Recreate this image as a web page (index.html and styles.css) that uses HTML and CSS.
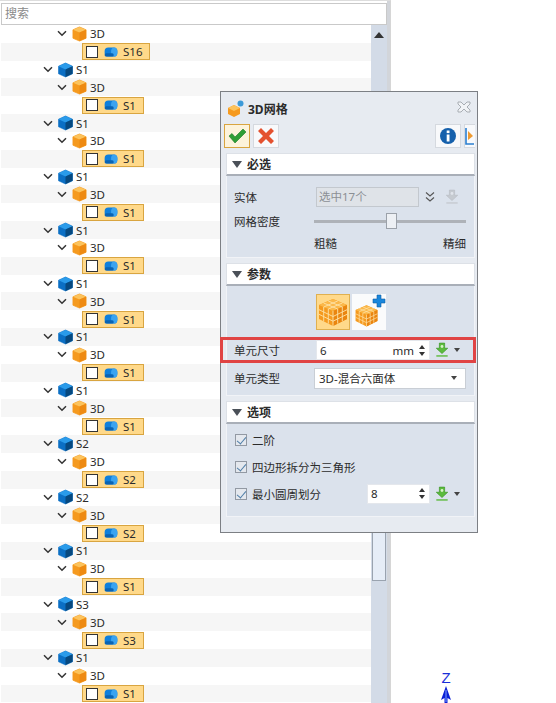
FILE: index.html
```html
<!DOCTYPE html>
<html lang="zh-CN">
<head>
  <meta charset="UTF-8">
  <title>3D网格</title>
  <link rel="stylesheet" href="styles.css">
</head>
<body>

<svg class="defs" width="0" height="0">
  <defs>
    <symbol id="cube-blue" viewBox="0 0 16 16">
      <path d="M8 0.5 L15.5 4 V12 L8 15.5 L0.5 12 V4 Z" fill="#0b6fc4" stroke="#0b6fc4" stroke-width="0.6" stroke-linejoin="round"/>
      <path d="M8 0.5 L15.5 4 L8 7.5 L0.5 4 Z" fill="#2a9bea"/>
      <path d="M8 7.5 L15.5 4 V12 L8 15.5 Z" fill="#07497f"/>
    </symbol>
    <symbol id="cube-orange" viewBox="0 0 16 16">
      <path d="M8 0.5 L15 3.5 V12.5 L8 15.5 L1 12.5 V3.5 Z" fill="#f59a1f" stroke="#f59a1f" stroke-width="0.8" stroke-linejoin="round"/>
      <path d="M8 0.5 L15 3.5 L8 6.5 L1 3.5 Z" fill="#fcc35c"/>
      <path d="M8 6.5 L15 3.5 V12.5 L8 15.5 Z" fill="#ee8a12"/>
    </symbol>
    <symbol id="solid" viewBox="0 0 15 11">
      <rect x="0.5" y="0.5" width="14" height="10" rx="4" fill="#0f7fdc"/>
      <ellipse cx="11" cy="5.5" rx="3.5" ry="5" fill="#3aa3f0"/>
      <rect x="0.5" y="7" width="10" height="3.5" rx="1.7" fill="#0a63b3"/>
    </symbol>
    <symbol id="chev" viewBox="0 0 10 7">
      <path d="M1 1.2 L5 5.2 L9 1.2" fill="none" stroke="#333" stroke-width="1.5"/>
    </symbol>
    <symbol id="grab" viewBox="0 0 16 18">
      <path d="M5 1 H11 V7 H14.5 L8 13 L1.5 7 H5 Z" fill="#5cbb3d" stroke="#3c9526" stroke-width="0.8"/>
      <circle cx="8" cy="5" r="1.6" fill="#d8f3c8"/>
      <rect x="1.5" y="15" width="13" height="1.6" fill="#5cbb3d"/>
    </symbol>
    <symbol id="blocks" viewBox="0 0 32 32">
      <path d="M16 3 L30 9 V23 L16 30 L2 23 V9 Z" fill="#f59a1f"/>
      <path d="M16 3 L30 9 L16 15 L2 9 Z" fill="#fbb84a"/>
      <path d="M16 15 L30 9 V23 L16 30 Z" fill="#ea850f"/>
      <path d="M6.7 7 L20.7 13 M11.3 5 L25.3 11 M25.3 7 L11.3 13 M20.7 5 L6.7 11 M2 13.7 L16 20.5 L30 13.7 M2 18.3 L16 25.2 L30 18.3 M6.7 11 V25.3 M11.3 13 V27.6 M20.7 13 V27.6 M25.3 11 V25.3 M16 15 V30" fill="none" stroke="#fde3a8" stroke-width="0.9"/>
    </symbol>
  </defs>
</svg>

<div class="app">
  <div class="pane">
    <div class="search">搜索</div>
    <div class="tree-wrap">
      <ul class="tree">
        <li class="row body"><svg class="chev"><use href="#chev"/></svg><svg class="cube"><use href="#cube-orange"/></svg><span>3D</span></li>
        <li class="row leaf"><span class="pick"><i class="box"></i><svg class="solid"><use href="#solid"/></svg><span>S16</span></span></li>
        <li class="row part"><svg class="chev"><use href="#chev"/></svg><svg class="cube"><use href="#cube-blue"/></svg><span>S1</span></li>
        <li class="row body"><svg class="chev"><use href="#chev"/></svg><svg class="cube"><use href="#cube-orange"/></svg><span>3D</span></li>
        <li class="row leaf"><span class="pick"><i class="box"></i><svg class="solid"><use href="#solid"/></svg><span>S1</span></span></li>
        <li class="row part"><svg class="chev"><use href="#chev"/></svg><svg class="cube"><use href="#cube-blue"/></svg><span>S1</span></li>
        <li class="row body"><svg class="chev"><use href="#chev"/></svg><svg class="cube"><use href="#cube-orange"/></svg><span>3D</span></li>
        <li class="row leaf"><span class="pick"><i class="box"></i><svg class="solid"><use href="#solid"/></svg><span>S1</span></span></li>
        <li class="row part"><svg class="chev"><use href="#chev"/></svg><svg class="cube"><use href="#cube-blue"/></svg><span>S1</span></li>
        <li class="row body"><svg class="chev"><use href="#chev"/></svg><svg class="cube"><use href="#cube-orange"/></svg><span>3D</span></li>
        <li class="row leaf"><span class="pick"><i class="box"></i><svg class="solid"><use href="#solid"/></svg><span>S1</span></span></li>
        <li class="row part"><svg class="chev"><use href="#chev"/></svg><svg class="cube"><use href="#cube-blue"/></svg><span>S1</span></li>
        <li class="row body"><svg class="chev"><use href="#chev"/></svg><svg class="cube"><use href="#cube-orange"/></svg><span>3D</span></li>
        <li class="row leaf"><span class="pick"><i class="box"></i><svg class="solid"><use href="#solid"/></svg><span>S1</span></span></li>
        <li class="row part"><svg class="chev"><use href="#chev"/></svg><svg class="cube"><use href="#cube-blue"/></svg><span>S1</span></li>
        <li class="row body"><svg class="chev"><use href="#chev"/></svg><svg class="cube"><use href="#cube-orange"/></svg><span>3D</span></li>
        <li class="row leaf"><span class="pick"><i class="box"></i><svg class="solid"><use href="#solid"/></svg><span>S1</span></span></li>
        <li class="row part"><svg class="chev"><use href="#chev"/></svg><svg class="cube"><use href="#cube-blue"/></svg><span>S1</span></li>
        <li class="row body"><svg class="chev"><use href="#chev"/></svg><svg class="cube"><use href="#cube-orange"/></svg><span>3D</span></li>
        <li class="row leaf"><span class="pick"><i class="box"></i><svg class="solid"><use href="#solid"/></svg><span>S1</span></span></li>
        <li class="row part"><svg class="chev"><use href="#chev"/></svg><svg class="cube"><use href="#cube-blue"/></svg><span>S1</span></li>
        <li class="row body"><svg class="chev"><use href="#chev"/></svg><svg class="cube"><use href="#cube-orange"/></svg><span>3D</span></li>
        <li class="row leaf"><span class="pick"><i class="box"></i><svg class="solid"><use href="#solid"/></svg><span>S1</span></span></li>
        <li class="row part"><svg class="chev"><use href="#chev"/></svg><svg class="cube"><use href="#cube-blue"/></svg><span>S2</span></li>
        <li class="row body"><svg class="chev"><use href="#chev"/></svg><svg class="cube"><use href="#cube-orange"/></svg><span>3D</span></li>
        <li class="row leaf"><span class="pick"><i class="box"></i><svg class="solid"><use href="#solid"/></svg><span>S2</span></span></li>
        <li class="row part"><svg class="chev"><use href="#chev"/></svg><svg class="cube"><use href="#cube-blue"/></svg><span>S2</span></li>
        <li class="row body"><svg class="chev"><use href="#chev"/></svg><svg class="cube"><use href="#cube-orange"/></svg><span>3D</span></li>
        <li class="row leaf"><span class="pick"><i class="box"></i><svg class="solid"><use href="#solid"/></svg><span>S2</span></span></li>
        <li class="row part"><svg class="chev"><use href="#chev"/></svg><svg class="cube"><use href="#cube-blue"/></svg><span>S1</span></li>
        <li class="row body"><svg class="chev"><use href="#chev"/></svg><svg class="cube"><use href="#cube-orange"/></svg><span>3D</span></li>
        <li class="row leaf"><span class="pick"><i class="box"></i><svg class="solid"><use href="#solid"/></svg><span>S1</span></span></li>
        <li class="row part"><svg class="chev"><use href="#chev"/></svg><svg class="cube"><use href="#cube-blue"/></svg><span>S3</span></li>
        <li class="row body"><svg class="chev"><use href="#chev"/></svg><svg class="cube"><use href="#cube-orange"/></svg><span>3D</span></li>
        <li class="row leaf"><span class="pick"><i class="box"></i><svg class="solid"><use href="#solid"/></svg><span>S3</span></span></li>
        <li class="row part"><svg class="chev"><use href="#chev"/></svg><svg class="cube"><use href="#cube-blue"/></svg><span>S1</span></li>
        <li class="row body"><svg class="chev"><use href="#chev"/></svg><svg class="cube"><use href="#cube-orange"/></svg><span>3D</span></li>
        <li class="row leaf"><span class="pick"><i class="box"></i><svg class="solid"><use href="#solid"/></svg><span>S1</span></span></li>
      </ul>
      <div class="scrollbar">
        <div class="arrow-up"></div>
        <div class="thumb"></div>
      </div>
    </div>
  </div>
  <div class="canvas"></div>
</div>

<!-- floating dialog -->
<div class="dialog">
  <div class="titlebar">
    <svg class="title-icon" viewBox="0 0 18 18" width="18" height="18">
      <path d="M7 5 L13 8 V14 L7 17 L1 14 V8 Z" fill="#f59a1f"/>
      <path d="M7 5 L13 8 L7 11 L1 8 Z" fill="#fcc35c"/>
      <circle cx="13.5" cy="3.5" r="3" fill="#3d9ad8"/>
    </svg>
    <span class="title">3D网格</span>
    <svg class="close" viewBox="0 0 14 12" width="14" height="12">
      <path d="M1 1 H4 L7 4 L10 1 H13 V3 L10 6 L13 9 V11 H10 L7 8 L4 11 H1 V9 L4 6 L1 3 Z" fill="#f1f3f6" stroke="#a8adb3"/>
    </svg>
  </div>

  <div class="toolbar">
    <button class="tool ok">
      <svg viewBox="0 0 20 18" width="20" height="18"><path d="M2 9 L5 6.5 L8 10 L16 2 L19 5 L8 16 Z" fill="#2f9e36" stroke="#1d7a25" stroke-width="0.6"/></svg>
    </button>
    <button class="tool">
      <svg viewBox="0 0 20 20" width="20" height="20"><path d="M2 5 L5 2 L10 7 L15 2 L18 5 L13 10 L18 15 L15 18 L10 13 L5 18 L2 15 L7 10 Z" fill="#e4512f"/></svg>
    </button>
    <span class="grow"></span>
    <button class="tool">
      <svg viewBox="0 0 18 18" width="18" height="18"><circle cx="9" cy="9" r="8" fill="#1560ac"/><rect x="7.7" y="7.5" width="2.8" height="7" fill="#fff"/><rect x="7.7" y="3.5" width="2.8" height="2.6" fill="#fff"/></svg>
    </button>
    <button class="tool cut">
      <svg viewBox="0 0 10 20" width="10" height="20"><path d="M1 2 V18 H9" fill="none" stroke="#2b7fd0" stroke-width="1.6"/><path d="M3 5 L8 10 L3 14 Z" fill="#ee9a30"/></svg>
    </button>
  </div>

  <section class="group">
    <h3 class="group-head"><i class="tri"></i>必选</h3>
    <div class="group-body required">
      <div class="line solid-line">
        <label class="lbl">实体</label>
        <div class="picked">选中17个</div>
        <svg class="dbl" viewBox="0 0 10 12" width="10" height="12"><path d="M1 1.5 L5 5 L9 1.5 M1 6.5 L5 10 L9 6.5" fill="none" stroke="#555" stroke-width="1.1"/></svg>
        <svg class="grab faded" viewBox="0 0 16 18"><use href="#grab"/></svg>
      </div>
      <div class="line density">
        <label class="lbl">网格密度</label>
        <div class="slider"><span class="knob"></span></div>
      </div>
      <div class="ends"><span>粗糙</span><span>精细</span></div>
    </div>
  </section>

  <section class="group">
    <h3 class="group-head"><i class="tri"></i>参数</h3>
    <div class="group-body params">
      <div class="modes">
        <button class="mode on"><svg viewBox="0 0 32 32" width="32" height="32"><use href="#blocks"/></svg></button>
        <button class="mode">
          <svg viewBox="0 0 32 32" width="25" height="25" class="mode-cube"><use href="#blocks"/></svg>
          <svg class="plus" viewBox="0 0 14 14" width="14" height="14"><path d="M5 1 H9 V5 H13 V9 H9 V13 H5 V9 H1 V5 H5 Z" fill="#1a87dc" stroke="#0d5ea6" stroke-width="0.6"/></svg>
        </button>
      </div>
      <div class="line marked">
        <label class="lbl">单元尺寸</label>
        <div class="field size"><span>6</span><span class="unit">mm</span><span class="spin"><i class="up"></i><i class="down"></i></span></div>
        <svg class="grab" viewBox="0 0 16 18"><use href="#grab"/></svg>
        <i class="caret"></i>
      </div>
      <div class="line type">
        <label class="lbl">单元类型</label>
        <div class="select"><span>3D-混合六面体</span><i class="caret"></i></div>
      </div>
    </div>
  </section>

  <section class="group">
    <h3 class="group-head"><i class="tri"></i>选项</h3>
    <div class="group-body options">
      <div class="check-line"><i class="check"></i><span>二阶</span></div>
      <div class="check-line"><i class="check"></i><span>四边形拆分为三角形</span></div>
      <div class="check-line"><i class="check"></i><span class="check-text">最小圆周划分</span>
        <div class="field count"><span>8</span><span class="spin"><i class="up"></i><i class="down"></i></span></div>
        <svg class="grab" viewBox="0 0 16 18"><use href="#grab"/></svg>
        <i class="caret"></i>
      </div>
    </div>
  </section>
</div>

<!-- view triad in the graphics area -->
<div class="axis">
  <span>Z</span>
  <svg viewBox="0 0 12 18" width="12" height="18"><path d="M6 0 L11 14 L7.5 12 V18 H4.5 V12 L1 14 Z" fill="#0a1fd6"/><path d="M6 4 V16" stroke="#7fa0ff" stroke-width="1"/></svg>
</div>

</body>
</html>
```

FILE: styles.css
```css
* { box-sizing: border-box; }
html, body { height: 100%; }
body { margin: 0; overflow: hidden; background: #fff; color: #2b2b2b;
  font-family: "Noto Sans", "Noto Sans CJK SC", sans-serif; font-size: 12px; }
button { padding: 0; font: inherit; cursor: pointer; }
.defs { position: absolute; }

.app { display: flex; height: 703px; }

/* Left tree panel */
.pane { width: 391px; height: 703px; padding: 2px 3px 0 1px; background: #fff;
  border-right: 1px solid #d6d6d6; border-top: 1px solid #ddd;
  box-shadow: inset -3px 0 0 #d2d5da; display: flex; flex-direction: column; overflow: hidden; }
.search { height: 22px; line-height: 20px; padding-left: 3px; color: #8a8a8a; font-size: 12px;
  border: 1px solid #c9c9c9; background: #fff; flex: none; }
.tree-wrap { flex: 1; display: flex; min-height: 0; }
.tree { list-style: none; margin: 0; padding: 0; flex: 1; overflow: hidden; }

.row { height: 17.84px; display: flex; align-items: center; font-size: 11.5px; white-space: nowrap; }
.row:nth-child(even) { background: #f6f6f6; }
.part { padding-left: 42px; }
.body { padding-left: 56px; }
.leaf { padding-left: 81px; }
.chev { width: 10px; height: 7px; margin-right: 5px; flex: none; }
.cube { width: 15px; height: 16px; margin-right: 3px; flex: none; }
.pick { display: flex; align-items: center; height: 17px; padding: 0 7px 0 3px; background: #ffd98a;
  border: 1px solid #d9a540; }
.box { width: 12px; height: 12px; background: #fff; border: 1px solid #333; margin-right: 6px; }
.solid { width: 14px; height: 10px; margin-right: 5px; flex: none; }

.scrollbar { width: 16px; flex: none; background: #d3dbe7; padding-top: 7px; }
.arrow-up { width: 0; height: 0; margin: 0 auto; border: 5px solid transparent; border-top: 0;
  border-bottom: 6px solid #333; }
.thumb { height: 424px; margin: 119px 1px 0; background: #e6edf7; border: 1px solid #9aa3af; }

.canvas { flex: 1; }

/* Dialog */
.dialog { position: absolute; left: 220px; top: 91px; width: 258px; height: 442px;
  background: #e7ebf1; border: 1px solid #7c7f84; padding: 0 2px 0 5px; font-size: 11.5px; }
.titlebar { height: 32px; padding-top: 2px; display: flex; align-items: center; }
.title-icon { margin: 0 3px 0 1px; }
.title { font-weight: 700; font-size: 12px; flex: 1; }
.close { margin: -5px 4px 0 0; }

.toolbar { display: flex; gap: 3px; height: 24px; margin-left: -2px; margin-bottom: 5px; }
.grow { flex: 1; }
.tool { width: 26px; height: 24px; display: flex; align-items: center; justify-content: center;
  background: #f8f9fb; border: 1px solid #d5d9df; }
.tool.ok { background: #fdf3db; border-color: #d9a540; }
.tool.cut { width: 11px; border-right: 0; overflow: hidden; justify-content: flex-start; }

.group { margin-bottom: 5px; }
.group-head { margin: 0; height: 23px; display: flex; align-items: center; padding-left: 5px;
  background: #fff; border: 1px solid #dde1e7; border-bottom: 2px solid #a9afb8;
  font-size: 12px; font-weight: 700; }
.tri { width: 0; height: 0; margin-right: 5px; border: 5px solid transparent; border-bottom: 0;
  border-top: 7px solid #4a5058; }
.group-body { background: #dbe2ec; border: 1px solid #f1f3f7; border-top: 0; padding: 0 7px; }

.required { height: 82px; padding-top: 11px; }
.params { height: 110px; padding-top: 8px; }
.options { height: 93px; padding-top: 5px; }

.line { display: flex; align-items: center; }
.lbl { width: 82px; flex: none; }
.picked { width: 103px; height: 20px; line-height: 18px; padding-left: 2px; color: #8b8f94;
  background: #dfe3e8; border: 1px solid #c3c8ce; }
.dbl { margin-left: 6px; }
.grab { width: 14px; height: 16px; margin-left: 5px; flex: none; }
.grab.faded { margin-left: 10px; opacity: 0.35; filter: grayscale(1); }
.density { height: 24px; margin-top: 2px; }
.slider { width: 152px; height: 3px; background: #aeb2b8; position: relative; margin-left: -2px; }
.knob { position: absolute; left: 72px; top: -7px; width: 11px; height: 16px; background: #edf0f4;
  border: 1px solid #9ba1a9; }
.ends { display: flex; justify-content: space-between; width: 152px; margin: 2px 0 0 80px; }

.modes { display: flex; gap: 2px; margin-left: 82px; height: 36px; }
.mode { width: 34px; height: 36px; display: flex; align-items: center; justify-content: center;
  background: #fafbfc; border: 0; position: relative; }
.mode.on { background: #ffd98a; border: 1px solid #e0b04f; }
.mode-cube { margin: 6px 5px 0 0; }
.plus { position: absolute; right: 0; top: 0; }

/* red annotation around the element size row */
.marked { height: 26px; margin: 7px -9px 0 -14px; padding-left: 11px; border: 3px solid #e04444; }
.field { height: 20px; display: flex; align-items: center; background: #fff; border: 1px solid #e4e7ec; padding-left: 3px; }
.size { width: 114px; }
.unit { margin-left: auto; margin-right: 3px; }
.spin { width: 10px; display: flex; flex-direction: column; align-items: center; gap: 3px; margin-right: 2px; }
.up, .down { width: 0; height: 0; border: 3px solid transparent; }
.up { border-top: 0; border-bottom: 4px solid #333; }
.down { border-bottom: 0; border-top: 4px solid #333; }
.caret { width: 0; height: 0; margin-left: 5px; border: 3px solid transparent; border-bottom: 0;
  border-top: 4px solid #444; flex: none; }
.type { height: 22px; margin-top: 4px; }
.select { width: 152px; height: 21px; margin-left: -2px; display: flex; align-items: center; justify-content: space-between;
  background: #fff; border: 1px solid #c9ced5; padding: 0 8px 0 4px; }

.check-line { display: flex; align-items: center; height: 21px; margin-bottom: 6px; }
.check { width: 12px; height: 12px; margin: 0 5px 0 1px; flex: none; position: relative;
  background: #e4e8ee; border: 1px solid #9299a3; }
.check::after { content: ""; position: absolute; left: 3px; top: 0; width: 4px; height: 8px;
  border: solid #4f7ea8; border-width: 0 1.5px 1.5px 0; transform: rotate(40deg); }
.check-text { width: 115px; }
.count { width: 63px; justify-content: space-between; }

/* Z axis */
.axis { position: absolute; left: 440px; top: 670px; width: 12px; display: flex; flex-direction: column;
  align-items: center; color: #1a2fd8; font-family: "Liberation Sans", sans-serif; font-size: 15px; line-height: 16px; }
```
